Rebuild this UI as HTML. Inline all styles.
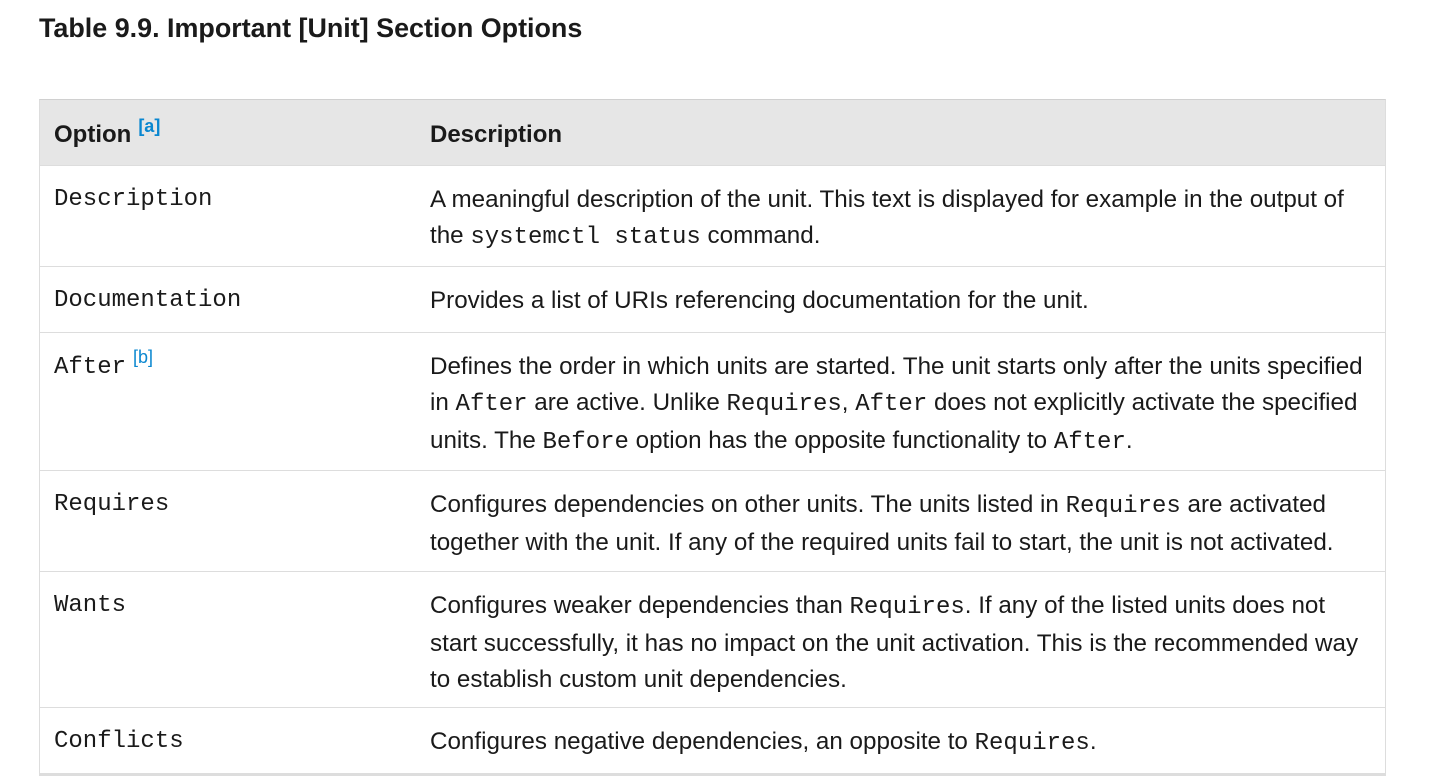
<!DOCTYPE html>
<html><head><style>
body{margin:0;background:#fff;width:1436px;height:776px;overflow:hidden;font-family:"Liberation Sans",sans-serif;color:#1a1a1a;position:relative}
h1{position:absolute;left:39px;top:11px;margin:0;font-size:26.9px;font-weight:bold;line-height:34px}
.r{position:absolute;left:39px;width:1347px;border-left:1px solid #ddd;border-right:1px solid #ddd;border-bottom:1px solid #ddd;box-sizing:border-box}
.c1{position:absolute;left:14px;top:16px;font-family:"Liberation Mono",monospace;font-size:24px;line-height:36px;white-space:nowrap}
.c2{position:absolute;left:390px;top:16px;width:935px;font-size:24.2px;line-height:36px}
code{font-family:"Liberation Mono",monospace;font-size:24px}
.h{background:#e6e6e6;border-top:1px solid #d0d0d0}
.h .c1,.h .c2{font-family:"Liberation Sans",sans-serif;font-weight:bold;font-size:24px;top:17px}
sup{color:#0a87d0;font-size:18px;font-family:"Liberation Sans",sans-serif;vertical-align:0;position:relative;top:-10px;margin-left:2px}
</style></head><body>
<h1>Table 9.9. Important [Unit] Section Options</h1>
<div class="r h" style="top:99px;height:67px"><div class="c1">Option<sup style="margin-left:7px">[a]</sup></div><div class="c2">Description</div></div>
<div class="r" style="top:166px;height:101px"><div class="c1">Description</div><div class="c2">A meaningful description of the unit. This text is displayed for example in the output of the <code>systemctl status</code> command.</div></div>
<div class="r" style="top:267px;height:66px"><div class="c1">Documentation</div><div class="c2">Provides a list of URIs referencing documentation for the unit.</div></div>
<div class="r" style="top:333px;height:138px"><div class="c1">After<sup style="margin-left:7px">[b]</sup></div><div class="c2">Defines the order in which units are started. The unit starts only after the units specified in <code>After</code> are active. Unlike <code>Requires</code>, <code>After</code> does not explicitly activate the specified units. The <code>Before</code> option has the opposite functionality to <code>After</code>.</div></div>
<div class="r" style="top:471px;height:101px"><div class="c1">Requires</div><div class="c2">Configures dependencies on other units. The units listed in <code>Requires</code> are activated together with the unit. If any of the required units fail to start, the unit is not activated.</div></div>
<div class="r" style="top:572px;height:136px"><div class="c1">Wants</div><div class="c2">Configures weaker dependencies than <code>Requires</code>. If any of the listed units does not start successfully, it has no impact on the unit activation. This is the recommended way to establish custom unit dependencies.</div></div>
<div class="r" style="top:708px;height:68px;border-bottom:3px solid #ddd"><div class="c1">Conflicts</div><div class="c2">Configures negative dependencies, an opposite to <code>Requires</code>.</div></div>
</body></html>
